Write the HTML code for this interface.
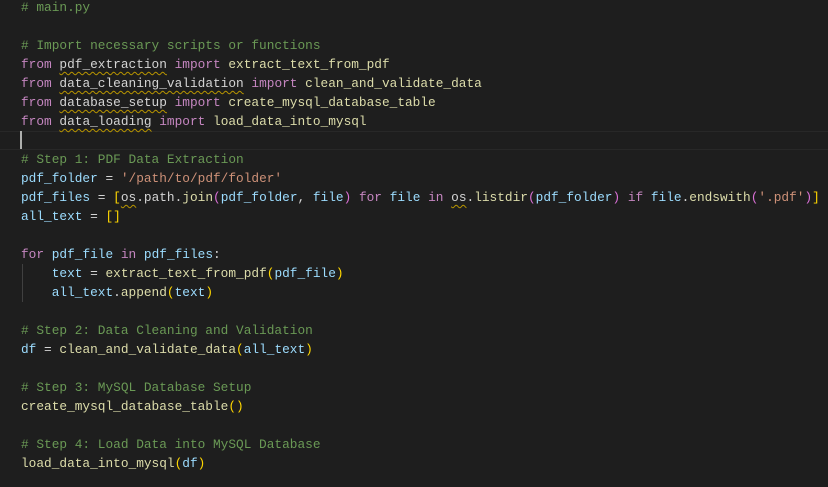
<!DOCTYPE html>
<html><head><style>
body{margin:0;background:#1e1e1e;width:828px;height:487px;overflow:hidden;}
pre{margin:0;position:absolute;left:21px;top:-2px;font-family:"Liberation Mono",monospace;font-size:12.8px;line-height:19px;color:#d4d4d4;}
.c{color:#6a9955}.k{color:#c586c0}.v{color:#9cdcfe}.f{color:#dcdcaa}.s{color:#ce9178}.g{color:#ffd700}.p{color:#da70d6}.b{color:#179fff}.m{color:#4ec9b0}
.u{text-decoration:underline wavy #b89500;text-decoration-thickness:1px;text-underline-offset:3px}
.cur{position:absolute;left:0;top:131px;width:828px;height:17px;border-top:1px solid #282828;border-bottom:1px solid #282828;}
.caret{position:absolute;left:20px;top:131px;width:2px;height:18px;background:#aeafad;}
.guide{position:absolute;left:22px;top:264px;width:1px;height:38px;background:#404040;}
</style></head><body>
<div class="cur"></div><div class="caret"></div><div class="guide"></div>
<pre><span class="c"># main.py</span>

<span class="c"># Import necessary scripts or functions</span>
<span class="k">from</span> <span class="u">pdf_extraction</span> <span class="k">import</span> <span class="f">extract_text_from_pdf</span>
<span class="k">from</span> <span class="u">data_cleaning_validation</span> <span class="k">import</span> <span class="f">clean_and_validate_data</span>
<span class="k">from</span> <span class="u">database_setup</span> <span class="k">import</span> <span class="f">create_mysql_database_table</span>
<span class="k">from</span> <span class="u">data_loading</span> <span class="k">import</span> <span class="f">load_data_into_mysql</span>

<span class="c"># Step 1: PDF Data Extraction</span>
<span class="v">pdf_folder</span> = <span class="s">'/path/to/pdf/folder'</span>
<span class="v">pdf_files</span> = <span class="g">[</span><span class="u">os</span>.path.<span class="f">join</span><span class="p">(</span><span class="v">pdf_folder</span>, <span class="v">file</span><span class="p">)</span> <span class="k">for</span> <span class="v">file</span> <span class="k">in</span> <span class="u">os</span>.<span class="f">listdir</span><span class="p">(</span><span class="v">pdf_folder</span><span class="p">)</span> <span class="k">if</span> <span class="v">file</span>.<span class="f">endswith</span><span class="p">(</span><span class="s">'.pdf'</span><span class="p">)</span><span class="g">]</span>
<span class="v">all_text</span> = <span class="g">[]</span>

<span class="k">for</span> <span class="v">pdf_file</span> <span class="k">in</span> <span class="v">pdf_files</span>:
    <span class="v">text</span> = <span class="f">extract_text_from_pdf</span><span class="g">(</span><span class="v">pdf_file</span><span class="g">)</span>
    <span class="v">all_text</span>.<span class="f">append</span><span class="g">(</span><span class="v">text</span><span class="g">)</span>

<span class="c"># Step 2: Data Cleaning and Validation</span>
<span class="v">df</span> = <span class="f">clean_and_validate_data</span><span class="g">(</span><span class="v">all_text</span><span class="g">)</span>

<span class="c"># Step 3: MySQL Database Setup</span>
<span class="f">create_mysql_database_table</span><span class="g">()</span>

<span class="c"># Step 4: Load Data into MySQL Database</span>
<span class="f">load_data_into_mysql</span><span class="g">(</span><span class="v">df</span><span class="g">)</span>
</pre>
</body></html>
